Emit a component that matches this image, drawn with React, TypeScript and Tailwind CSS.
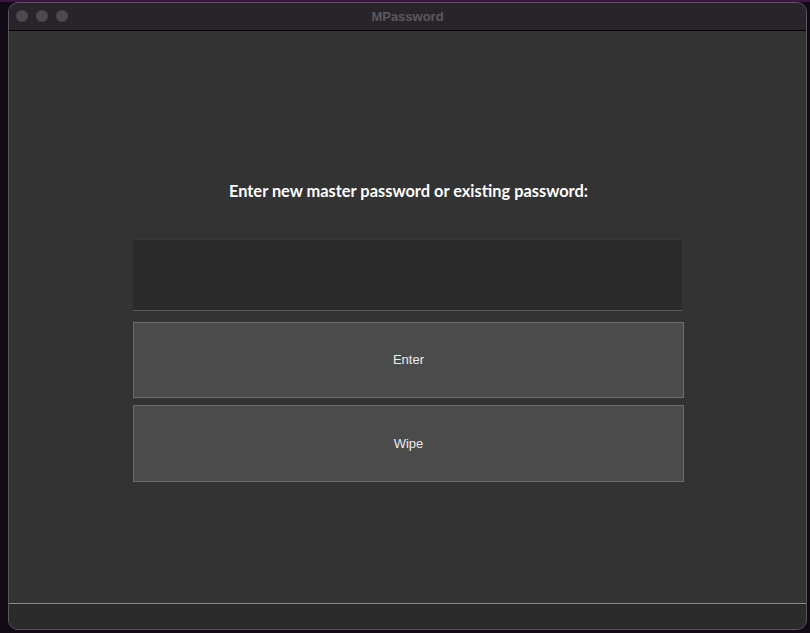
export default function App() {
  return (
    <div className="w-[810px] h-[633px] bg-[#120a14] pt-[2px] pl-[8px] overflow-hidden border-t-2 border-[#3b1442]">
      <div className="w-[799px] h-[628px] -mt-[2px] rounded-[10px] border border-[#5a565c] bg-[#333333] flex flex-col overflow-hidden">
        {/* Title bar */}
        <div className="relative h-[28px] shrink-0 bg-[#28242a] border-b border-black flex items-center justify-center">
          <div className="absolute left-[7px] top-[7px] flex gap-[8px]">
            <span className="w-[12px] h-[12px] rounded-full bg-[#4b484e]" />
            <span className="w-[12px] h-[12px] rounded-full bg-[#4b484e]" />
            <span className="w-[12px] h-[12px] rounded-full bg-[#4b484e]" />
          </div>
          <span className="text-[13px] font-bold text-[#5b595d] font-['Liberation_Sans',Arial,sans-serif]">
            MPassword
          </span>
        </div>

        {/* Content */}
        <div className="flex-1 flex flex-col items-center pt-[150px] pl-[2px]">
          <h1 className="text-[16.4px] leading-[20px] font-bold text-white font-['Lato','Noto_Sans',sans-serif]">
            Enter new master password or existing password:
          </h1>
          <div className="mt-[38px] w-[551px] flex flex-col">
            <input
              type="password"
              className="w-[549px] h-[72px] bg-[#2a2a2a] border-t border-[#383838] border-b border-b-[#5c5c5c] outline-none text-white"
            />
            <button className="mt-[11px] w-[551px] h-[76px] bg-[#4b4b4b] border border-[#6c6c6c] text-[13px] text-[#ececec] font-['Liberation_Sans',Arial,sans-serif]">
              Enter
            </button>
            <button className="mt-[7px] w-[551px] h-[77px] bg-[#4b4b4b] border border-[#6c6c6c] text-[13px] text-[#ececec] font-['Liberation_Sans',Arial,sans-serif]">
              Wipe
            </button>
          </div>
        </div>

        {/* Status bar */}
        <div className="h-[26px] shrink-0 bg-[#2b2b2b] border-t border-[#8a8a8a]" />
      </div>
    </div>
  );
}
